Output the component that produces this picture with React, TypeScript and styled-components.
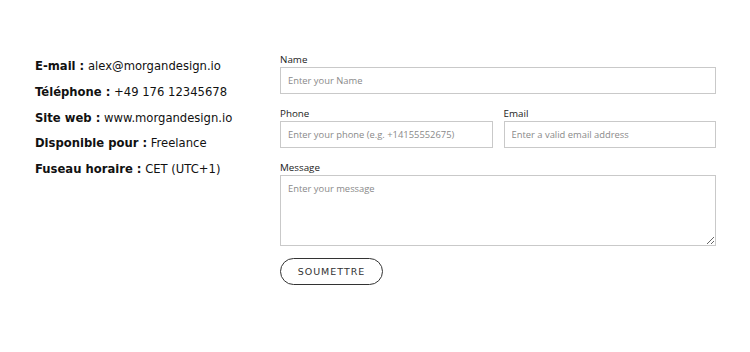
import React from 'react';
import styled, { createGlobalStyle } from 'styled-components';

const GlobalStyle = createGlobalStyle`
  html, body {
    margin: 0;
    padding: 0;
    background: #ffffff;
  }
  * {
    box-sizing: border-box;
  }
`;

const Page = styled.div`
  display: flex;
  width: 750px;
  height: 352px;
  padding: 52px 34px 0 35px;
`;

const InfoColumn = styled.div`
  width: 245px;
  flex-shrink: 0;
  padding-top: 2px;
  font-family: 'DejaVu Sans', 'Liberation Sans', sans-serif;
  font-size: 11.6px;
  color: #111111;
`;

const InfoRow = styled.div`
  line-height: 25.75px;
  white-space: nowrap;
`;

const InfoLabel = styled.span`
  font-weight: 700;
`;

const Form = styled.form`
  flex: 1;
  display: flex;
  flex-direction: column;
  font-family: 'Open Sans', 'Liberation Sans', sans-serif;
`;

const FieldRow = styled.div`
  display: flex;
  gap: 11px;
  margin-bottom: 12px;
`;

const Field = styled.div`
  flex: 1;
  display: flex;
  flex-direction: column;
`;

const Label = styled.label`
  font-size: 9.8px;
  line-height: 15px;
  color: #222222;
`;

const Input = styled.input`
  height: 27px;
  width: 100%;
  border: 1px solid #c9c9c9;
  padding: 0 7px;
  font-family: inherit;
  font-size: 9.4px;
  color: #333333;
  outline: none;
  &::placeholder {
    color: #8a8a8a;
  }
`;

const TextArea = styled.textarea`
  display: block;
  height: 71px;
  width: 100%;
  border: 1px solid #c9c9c9;
  padding: 6px 7px;
  font-family: inherit;
  font-size: 9.4px;
  color: #333333;
  outline: none;
  resize: vertical;
  &::placeholder {
    color: #8a8a8a;
  }
`;

const SubmitButton = styled.button`
  align-self: flex-start;
  width: 103px;
  height: 27px;
  border: 1.5px solid #333333;
  border-radius: 14px;
  background: #ffffff;
  font-family: 'DejaVu Sans', 'Liberation Sans', sans-serif;
  font-size: 9.5px;
  letter-spacing: 1px;
  color: #333333;
  cursor: pointer;
`;

const info = [
  { label: 'E-mail :', value: 'alex@morgandesign.io' },
  { label: 'Téléphone :', value: '+49 176 12345678' },
  { label: 'Site web :', value: 'www.morgandesign.io' },
  { label: 'Disponible pour :', value: 'Freelance' },
  { label: 'Fuseau horaire :', value: 'CET (UTC+1)' },
];

export default function App() {
  return (
    <>
      <GlobalStyle />
      <Page>
        <InfoColumn>
          {info.map((item) => (
            <InfoRow key={item.label}>
              <InfoLabel>{item.label}</InfoLabel> {item.value}
            </InfoRow>
          ))}
        </InfoColumn>
        <Form onSubmit={(e) => e.preventDefault()}>
          <FieldRow>
            <Field>
              <Label>Name</Label>
              <Input placeholder="Enter your Name" />
            </Field>
          </FieldRow>
          <FieldRow>
            <Field>
              <Label>Phone</Label>
              <Input placeholder="Enter your phone (e.g. +14155552675)" />
            </Field>
            <Field>
              <Label>Email</Label>
              <Input placeholder="Enter a valid email address" />
            </Field>
          </FieldRow>
          <FieldRow>
            <Field>
              <Label>Message</Label>
              <TextArea placeholder="Enter your message" />
            </Field>
          </FieldRow>
          <SubmitButton type="submit">SOUMETTRE</SubmitButton>
        </Form>
      </Page>
    </>
  );
}
